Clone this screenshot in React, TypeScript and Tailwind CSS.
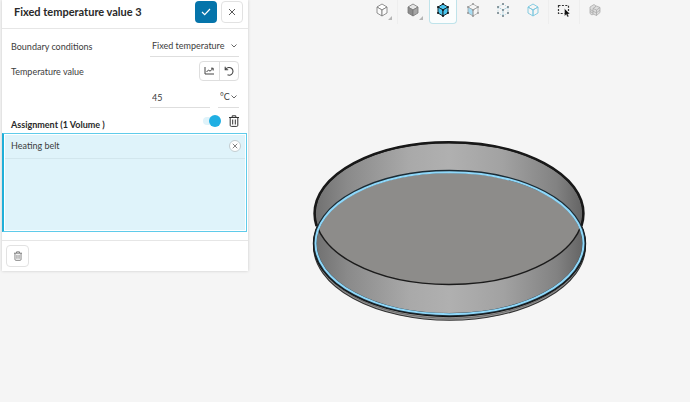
import { useState } from "react";
import type { ReactNode } from "react";

type CubeProps = {
  edge: string;
  top?: string;
  left?: string;
  right?: string;
  dots?: string;
  dashed?: boolean;
  width?: number;
};

const corners = [
  [7, 1], [12, 4], [12, 10], [7, 13], [2, 10], [2, 4], [7, 7],
];

function Cube({ edge, top = "none", left = "none", right = "none", dots, dashed, width = 1 }: CubeProps) {
  return (
    <svg viewBox="0 0 14 14" className="h-3.5 w-3.5" aria-hidden="true">
      <g stroke={edge} strokeWidth={width} strokeLinejoin="round" strokeDasharray={dashed ? "1.2 1.2" : undefined}>
        <path d="M7 1 12 4 7 7 2 4Z" fill={top} />
        <path d="M2 4 7 7V13L2 10Z" fill={left} />
        <path d="M12 4 7 7V13L12 10Z" fill={right} />
      </g>
      {dots && corners.map(([x, y]) => (
        <circle key={`${x}-${y}`} cx={x} cy={y} r="1" fill={dots} />
      ))}
    </svg>
  );
}

function BoxSelectIcon() {
  return (
    <svg viewBox="0 0 14 14" className="h-3.5 w-3.5" aria-hidden="true">
      <path d="M1.5 2.5H11.5V10.5H1.5Z" fill="none" stroke="#333" strokeWidth="1.2" strokeDasharray="2 1.4" />
      <path d="M7.5 5.5V13L9.3 11.5 10.4 14 11.8 13.4 10.8 11H13Z" fill="#111" stroke="#f5f5f5" strokeWidth=".4" />
    </svg>
  );
}

function LayersIcon() {
  return (
    <svg viewBox="0 0 14 14" className="h-3.5 w-3.5" aria-hidden="true" fill="#dedede" stroke="#a5a5a5" strokeWidth=".7">
      <path d="M2 4 6 1.5 8 3V9L4 12 2 10.5Z" />
      <path d="M5 5.5 8.5 3 12 4.5V9.5L8.5 12.5 5 11Z" />
      <path d="M5 5.5 8.5 7 12 4.5M8.5 7V12.5M5 8.2 8.5 9.8 12 7M2 6.5 5 8M2 8.5 5 10" fill="none" />
    </svg>
  );
}

function Chevron() {
  return (
    <svg viewBox="0 0 6 4" className="pointer-events-none absolute right-0.5 top-1/2 h-1 w-1.5 -translate-y-1/2" aria-hidden="true">
      <path d="M.5 .5 3 3 5.5 .5" fill="none" stroke="#555" strokeWidth=".9" />
    </svg>
  );
}

function CrossIcon({ className }: { className: string }) {
  return (
    <svg viewBox="0 0 8 8" className={className} aria-hidden="true">
      <path d="M1 1 7 7M7 1 1 7" stroke="#5a5a5a" strokeWidth="1" />
    </svg>
  );
}

function TrashIcon({ className }: { className: string }) {
  return (
    <svg viewBox="0 0 10 12" className={className} aria-hidden="true" fill="none" stroke="currentColor" strokeWidth="1">
      <path d="M0 2.5H10M3.2 2.3V.8H6.8V2.3M1.2 2.5V10.3Q1.2 11.4 2.3 11.4H7.7Q8.8 11.4 8.8 10.3V2.5M3.7 4.5V9.5M6.3 4.5V9.5" />
    </svg>
  );
}

function Tool({ label, active, menu, children }: { label: string; active?: boolean; menu?: boolean; children: ReactNode }) {
  return (
    <button
      type="button"
      aria-label={label}
      className={
        active
          ? "relative mx-px flex h-6 w-7 items-center justify-center rounded-b border border-t-0 border-[#bfe3ea] bg-[#fbfdfd] pb-1"
          : "relative mx-px flex h-6 w-7 items-center justify-center pb-1"
      }
    >
      {children}
      {menu && (
        <svg viewBox="0 0 4 4" className="absolute bottom-1 right-1 h-1 w-1" aria-hidden="true">
          <path d="M4 0V4H0Z" fill="#b5b5b5" />
        </svg>
      )}
    </button>
  );
}

function Separator() {
  return <div className="h-6 w-px bg-[#eeeeee]" />;
}

function Dish() {
  return (
    <svg viewBox="311 138 280 186" className="w-full" role="img" aria-label="Round dish">
      <defs>
        <linearGradient id="wall" x1="0" x2="1" y1="0" y2="0">
          <stop offset="0" stopColor="#707070" />
          <stop offset=".12" stopColor="#8a8a8a" />
          <stop offset=".35" stopColor="#a9a9a9" />
          <stop offset=".5" stopColor="#b0b0b0" />
          <stop offset=".7" stopColor="#a2a2a2" />
          <stop offset=".9" stopColor="#828282" />
          <stop offset="1" stopColor="#636363" />
        </linearGradient>
        <clipPath id="rim">
          <ellipse cx="449" cy="213.5" rx="134.5" ry="71" />
        </clipPath>
      </defs>
      {/* base plate */}
      <ellipse cx="449.5" cy="246" rx="136" ry="74.3" fill="#999" stroke="#333" strokeWidth="1.1" />
      <ellipse cx="449.5" cy="244" rx="136" ry="74.2" fill="#a9a9a9" stroke="#555" strokeWidth=".7" />
      <ellipse cx="449.5" cy="243.5" rx="135.8" ry="72.8" fill="#999" stroke="#111" strokeWidth="1.8" />
      {/* side wall */}
      <ellipse cx="449.5" cy="243" rx="134.5" ry="71.2" fill="url(#wall)" />
      <ellipse cx="449" cy="213.5" rx="134.5" ry="71" fill="url(#wall)" />
      <g clipPath="url(#rim)">
        <ellipse cx="449.5" cy="243" rx="134.5" ry="71.2" fill="#8d8c8a" />
      </g>
      <ellipse cx="449" cy="213.5" rx="134" ry="71" fill="none" stroke="#1b1b1b" strokeWidth="1.5" />
      <path d="M316.5 226Q314.5 220 314.5 213.5A134.5 71.3 0 0 1 583.5 213.5Q583.5 220 581.5 226" fill="none" stroke="#181818" strokeWidth="2.4" />
      {/* highlighted edge */}
      <ellipse cx="449.5" cy="243" rx="134.5" ry="71.6" fill="none" stroke="#1c2c35" strokeWidth="3.2" />
      <ellipse cx="449.5" cy="243.2" rx="134" ry="71" fill="none" stroke="#8fd8fa" strokeWidth="2" />
    </svg>
  );
}

export default function App() {
  const [value, setValue] = useState("45");
  const [enabled, setEnabled] = useState(true);

  return (
    <div className="flex min-h-screen bg-[#f5f5f5] font-['Lato',sans-serif] text-[9px] leading-4 text-[#3c3c3c]">
      {/* Settings panel */}
      <aside className="ml-0.5 w-[246px] shrink-0 self-start bg-white shadow-[0_0_3px_rgba(0,0,0,0.18)]">
        <header className="flex h-[29px] items-center gap-1 border-b border-[#e6e6e6] pl-3 pr-[5px]">
          <h1 className="flex-1 pb-1 text-[11px] font-bold text-[#292929]">Fixed temperature value 3</h1>
          <button type="button" aria-label="Apply" className="mb-1 flex h-[22px] w-[22px] items-center justify-center rounded-sm bg-[#0574aa]">
            <svg viewBox="0 0 10 8" className="h-2 w-2.5" aria-hidden="true">
              <path d="M1 4 3.7 6.7 9 1" fill="none" stroke="#fff" strokeWidth="1.2" />
            </svg>
          </button>
          <button type="button" aria-label="Close" className="mb-1 flex h-[22px] w-[22px] items-center justify-center rounded-sm border border-[#e2e2e2]">
            <CrossIcon className="h-2 w-2" />
          </button>
        </header>

        <div className="flex items-center justify-between px-[9px] pt-1.5">
          <label htmlFor="condition" className="pt-0.5">Boundary conditions</label>
          <div className="relative w-[89px] border-b border-[#dedede]">
            <select id="condition" className="h-[21px] w-full appearance-none bg-transparent pl-0.5">
              <option>Fixed temperature</option>
            </select>
            <Chevron />
          </div>
        </div>

        <div className="flex items-center justify-between px-[9px] pt-1">
          <span className="pt-0.5">Temperature value</span>
          <div className="flex h-5 w-10 divide-x divide-[#dedede] rounded-sm border border-[#dedede]">
            <button type="button" aria-label="Table input" className="flex flex-1 items-center justify-center">
              <svg viewBox="0 0 10 8" className="h-2 w-2.5" fill="none" stroke="#444" aria-hidden="true">
                <path d="M1 0V7H10M2.5 5 4.5 3 6 4.2 9 1.5M7 1.2H9.2V3.5" />
              </svg>
            </button>
            <button type="button" aria-label="Reset" className="flex flex-1 items-center justify-center">
              <svg viewBox="0 0 10 10" className="h-2.5 w-2.5" fill="none" stroke="#444" strokeWidth="1.1" aria-hidden="true">
                <path d="M1.2 .8V3.8H4.2M1.5 3.5C3 1.2 6 .8 7.8 2.5C9.5 4.2 9.3 7 7.5 8.4C6.3 9.3 4.8 9.4 3.5 8.8" />
              </svg>
            </button>
          </div>
        </div>

        <div className="flex justify-end gap-2 px-[9px] pt-1.5">
          <input
            aria-label="Temperature value"
            value={value}
            onChange={(e) => setValue(e.target.value)}
            className="h-[21px] w-[60px] border-b border-[#dedede] pl-0.5"
          />
          <div className="relative w-[21px] border-b border-[#dedede]">
            <select aria-label="Unit" className="h-5 w-full appearance-none bg-transparent pl-0.5">
              <option>°C</option>
            </select>
            <Chevron />
          </div>
        </div>

        <div className="flex h-[25px] items-center gap-2 px-[9px]">
          <h2 className="flex-1 pt-2 font-bold text-[#292929]">Assignment (1 Volume )</h2>
          <label className="relative h-3 w-[18px]">
            <input
              type="checkbox"
              aria-label="Pick volumes"
              checked={enabled}
              onChange={(e) => setEnabled(e.target.checked)}
              className="peer absolute left-0 top-0.5 h-2 w-4 appearance-none rounded-full bg-[#dff3fa]"
            />
            <span className="pointer-events-none absolute left-0 h-3 w-3 rounded-full bg-[#aaa] peer-checked:left-1.5 peer-checked:bg-[#20afe3]" />
          </label>
          <button type="button" aria-label="Clear assignment" className="text-[#333]">
            <TrashIcon className="h-3 w-2.5" />
          </button>
        </div>

        <div className="mr-px h-[99px] border border-l-2 border-[#5fcbea] border-l-[#20afd8] bg-white p-px">
          <ul className="h-full bg-[#dff3fa]">
            <li className="flex h-6 items-center justify-between border-b border-[#d2e6ed] pb-0.5 pl-1.5 pr-1">
              <span>Heating belt</span>
              <button type="button" aria-label="Remove Heating belt" className="flex h-3 w-3 items-center justify-center rounded-full border border-[#c3cdd1] bg-white">
                <CrossIcon className="h-1.5 w-1.5" />
              </button>
            </li>
          </ul>
        </div>

        <footer className="mt-2 border-t border-[#e6e6e6] p-1">
          <button type="button" aria-label="Delete" className="flex h-[22px] w-[23px] items-center justify-center rounded-sm border border-[#e2e2e2] text-[#666]">
            <TrashIcon className="h-2.5 w-2" />
          </button>
        </footer>
      </aside>

      {/* Viewer */}
      <main className="flex min-w-0 flex-1 flex-col">
        <nav className="flex justify-center pl-[39px]" aria-label="View tools">
          <Tool label="Wireframe" menu><Cube edge="#777" top="#fff" left="#fafafa" right="#fafafa" width={0.8} /></Tool>
          <Separator />
          <Tool label="Shaded" menu><Cube edge="#777" top="#e6e6e6" left="#8c8c8c" right="#a5a5a5" width={0.8} /></Tool>
          <Tool label="Select volumes" active><Cube edge="#172b33" top="#49c4ed" left="#49c4ed" right="#49c4ed" dots="#111" /></Tool>
          <Tool label="Select faces"><Cube edge="#999" left="#a8dcf2" dots="#999" width={0.7} /></Tool>
          <Tool label="Select vertices"><Cube edge="#8bc4d8" dots="#6f7f86" dashed width={0.6} /></Tool>
          <Tool label="Select edges"><Cube edge="#7cc7df" width={0.9} /></Tool>
          <Separator />
          <Tool label="Box select"><BoxSelectIcon /></Tool>
          <Separator />
          <Tool label="Mesh clip"><LayersIcon /></Tool>
        </nav>
        <div className="mx-auto w-full max-w-[316px] pr-9 pt-[114px]">
          <Dish />
        </div>
      </main>
    </div>
  );
}
